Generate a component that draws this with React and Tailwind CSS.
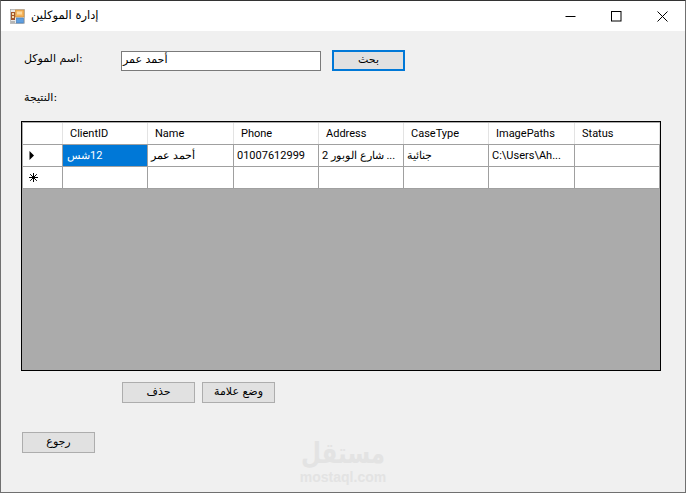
const COLS = [
  { name: "ClientID", w: "w-[85px]" },
  { name: "Name", w: "w-[86px]" },
  { name: "Phone", w: "w-[85px]" },
  { name: "Address", w: "w-[85px]" },
  { name: "CaseType", w: "w-[85px]" },
  { name: "ImagePaths", w: "w-[86px]" },
  { name: "Status", w: "w-[85px]" },
];

const ROW = ["", "أحمد عمر", "01007612999", "شارع الوبور 2 ...", "جنائية", "C:\\Users\\Ah...", ""];

function WinButton({ children, className = "border border-[#adadad]" }) {
  return (
    <button className={`h-[21px] w-[73px] bg-[#e1e1e1] text-[11px] text-black flex items-center justify-center font-['DejaVu_Sans',sans-serif] ${className}`}>
      {children}
    </button>
  );
}

function AppIcon() {
  return (
    <svg width="15" height="15" viewBox="0 0 15 15" className="shrink-0">
      <rect x="0.5" y="0.5" width="14" height="14" fill="#e8e8e8" stroke="#9a9a9a" strokeWidth="0.6" />
      <rect x="1" y="3" width="4" height="8" fill="#a4552a" />
      <rect x="2" y="4" width="2" height="2" fill="#f5d9a8" />
      <rect x="2" y="7" width="2" height="2" fill="#f5d9a8" />
      <rect x="5.5" y="1" width="8.5" height="7" fill="#f6b35a" stroke="#c9862e" strokeWidth="0.6" />
      <rect x="7" y="2.5" width="5" height="3" fill="#fbd9a0" />
      <rect x="6.5" y="9" width="7" height="5" fill="#5f9fe0" stroke="#3f76b3" strokeWidth="0.6" />
      <rect x="1" y="12" width="4" height="2" fill="#b5b5b5" />
    </svg>
  );
}

export default function App() {
  return (
    <div className="relative w-[686px] h-[493px] overflow-hidden bg-[#f0f0f0] border border-[#707070] border-t-[#333333] text-black font-['Roboto',sans-serif]">
      {/* Title bar */}
      <div className="h-[30px] bg-white flex items-center pl-[9px]">
        <AppIcon />
        <span className="ml-[6px] text-[11.5px] font-['DejaVu_Sans',sans-serif]">إدارة الموكلين</span>
        <div className="ml-auto flex items-center h-full">
          <div className="w-[46px] h-full flex items-center justify-center">
            <svg width="11" height="11" viewBox="0 0 11 11"><path d="M0.5 5.5H10.5" stroke="#000" strokeWidth="1" /></svg>
          </div>
          <div className="w-[46px] h-full flex items-center justify-center">
            <svg width="11" height="11" viewBox="0 0 11 11"><rect x="0.5" y="0.5" width="9.5" height="9.5" fill="none" stroke="#000" /></svg>
          </div>
          <div className="w-[46px] h-full flex items-center justify-center">
            <svg width="11" height="11" viewBox="0 0 11 11"><path d="M0.5 0.5L10.5 10.5M10.5 0.5L0.5 10.5" stroke="#000" strokeWidth="1" /></svg>
          </div>
        </div>
      </div>

      {/* Client form */}
      <div className="pl-[20px] pt-[19px]">
        <div className="flex items-center h-[21px]">
          <span className="ml-[3px] w-[97px] text-[11px] leading-[18px] -mt-[3px] font-['DejaVu_Sans',sans-serif]">اسم الموكل:</span>
          <div className="w-[200px] h-[20px] border border-[#7a7a7a] bg-white text-[11px] flex items-center pl-[1px] font-['DejaVu_Sans',sans-serif]">أحمد عمر</div>
          <WinButton className="ml-[11px] border-2 border-[#0078d7]">بحث</WinButton>
        </div>

        <div className="ml-[3px] mt-[18px] h-[18px] text-[11px] leading-[18px] font-['DejaVu_Sans',sans-serif]">النتيجة:</div>

        {/* Data grid */}
        <div className="mt-[14px] w-[640px] h-[250px] border border-black pl-[1px] pt-[1px] bg-[#ababab] overflow-hidden">
          <div className="flex h-[22px] items-stretch bg-white border-b border-[#a0a0a0] text-[11px]">
            <div className="w-[40px] border-r border-[#e3e3e3]" />
            {COLS.map((c) => (
              <div key={c.name} className={`${c.w} pl-[7px] pt-[1px] border-r border-[#e3e3e3] flex items-center`}>{c.name}</div>
            ))}
          </div>
          <div className="flex h-[22px] bg-white border-b border-[#a0a0a0] text-[11px]">
            <div className="w-[40px] border-r border-[#a0a0a0] flex items-center pl-[6px]">
              <svg width="6" height="9" viewBox="0 0 6 9"><path d="M0.5 0L5 4.5L0.5 9Z" fill="#000" /></svg>
            </div>
            <div className={`${COLS[0].w} bg-[#0078d7] text-white pt-[1px] border-r border-[#a0a0a0] flex items-center justify-start pl-[4px]`}>
              <span dir="rtl">12شس</span>
            </div>
            {COLS.slice(1).map((c, i) => (
              <div key={c.name} className={`${c.w} pl-[3px] pt-[1px] border-r border-[#a0a0a0] flex items-center whitespace-nowrap overflow-hidden`}>
                <span>{ROW[i + 1]}</span>
              </div>
            ))}
          </div>
          <div className="flex h-[22px] bg-white border-b border-[#a0a0a0]">
            <div className="w-[40px] border-r border-[#a0a0a0] flex items-center pl-[6px]">
              <svg width="9" height="9" viewBox="0 0 9 9"><path d="M4.5 0V9M0 4.5H9M1.2 1.2L7.8 7.8M7.8 1.2L1.2 7.8" stroke="#000" strokeWidth="1" /></svg>
            </div>
            {COLS.map((c) => (
              <div key={c.name} className={`${c.w} border-r border-[#a0a0a0]`} />
            ))}
          </div>
        </div>

        {/* Actions */}
        <div className="flex ml-[101px] mt-[11px] gap-[7px]">
          <WinButton>حذف</WinButton>
          <WinButton>وضع علامة</WinButton>
        </div>
        <div className="ml-[1px] mt-[29px]">
          <WinButton>رجوع</WinButton>
        </div>
      </div>

      {/* Watermark */}
      <div className="absolute left-[300px] top-[437px] w-[84px] flex flex-col items-center text-[#e3e3e3] pointer-events-none">
        <span className="text-[23px] leading-[30px] font-bold scale-y-125 font-['DejaVu_Sans',sans-serif]">مستقل</span>
        <span className="mt-[2px] text-[14px] leading-[14px] font-semibold font-['Liberation_Sans',sans-serif]">mostaql.com</span>
      </div>
    </div>
  );
}
